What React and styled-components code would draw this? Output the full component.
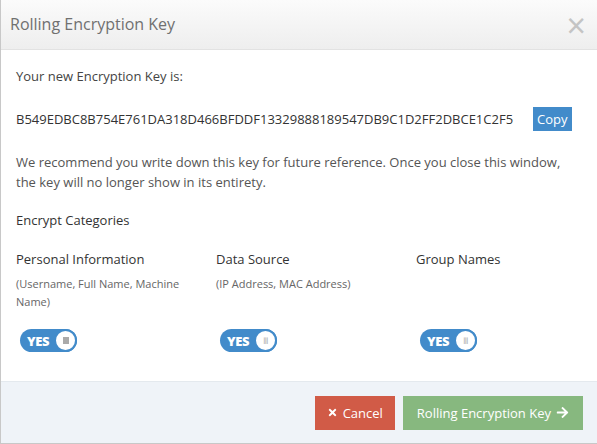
import React from "react";
import styled, { createGlobalStyle } from "styled-components";
import { FaTimes, FaArrowRight } from "react-icons/fa";

const GlobalStyle = createGlobalStyle`
  html, body {
    margin: 0;
    padding: 0;
    background: #fff;
  }
  body {
    font-family: "Open Sans", "Liberation Sans", Arial, sans-serif;
    font-size: 13px;
    color: #393939;
  }
`;

const KEY = "B549EDBC8B754E761DA318D466BFDDF13329888189547DB9C1D2FF2DBCE1C2F5";

const categories = [
  {
    title: "Personal Information",
    sub: "(Username, Full Name, Machine Name)",
    grip: "square",
  },
  { title: "Data Source", sub: "(IP Address, MAC Address)", grip: "lines" },
  { title: "Group Names", sub: "", grip: "lines" },
];

const Toggle = ({ grip }) => (
  <SwitchWrap>
    <SwitchLabel>YES</SwitchLabel>
    <Knob>{grip === "square" ? <GripSquare /> : <GripLines>III</GripLines>}</Knob>
  </SwitchWrap>
);

const App = () => {
  return (
    <>
      <GlobalStyle />
      <Modal>
        <Header>
          <Title>Rolling Encryption Key</Title>
          <Close>×</Close>
        </Header>
        <Body>
          <Text>Your new Encryption Key is:</Text>
          <KeyRow>
            <KeyText>{KEY}</KeyText>
            <CopyButton>Copy</CopyButton>
          </KeyRow>
          <Paragraph>
            We recommend you write down this key for future reference. Once you
            close this window, the key will no longer show in its entirety.
          </Paragraph>
          <SectionTitle>Encrypt Categories</SectionTitle>
          <Columns>
            {categories.map((c) => (
              <Column key={c.title}>
                <ColTitle>{c.title}</ColTitle>
                <ColSub>{c.sub}</ColSub>
                <Toggle grip={c.grip} />
              </Column>
            ))}
          </Columns>
        </Body>
        <Footer>
          <Button $color="#d15b47" $pad="12px">
            <FaTimes size={11} />
            Cancel
          </Button>
          <Button $color="#87b87f" $pad="14px">
            Rolling Encryption Key
            <FaArrowRight size={13} />
          </Button>
        </Footer>
      </Modal>
    </>
  );
};

export default App;

const Modal = styled.div`
  width: 597px;
  height: 444px;
  box-sizing: border-box;
  display: flex;
  flex-direction: column;
  border-left: 1px solid #c8c8c8;
  border-bottom: 1px solid #c8c8c8;
  background: #fff;
`;

const Header = styled.div`
  height: 50px;
  flex-shrink: 0;
  box-sizing: border-box;
  display: flex;
  align-items: center;
  justify-content: space-between;
  padding: 0 11px 0 9px;
  background: linear-gradient(#fbfbfb, #eeeeee);
  border-bottom: 1px solid #e2e2e2;
`;

const Title = styled.h4`
  margin: 0;
  font-size: 16px;
  font-weight: 400;
  color: #707070;
  margin-top: -2px;
`;

const Close = styled.span`
  font-size: 34px;
  font-weight: 400;
  line-height: 1;
  color: #c4c4c4;
`;

const Body = styled.div`
  flex: 1;
  padding: 16px 0 0 15px;
`;

const Text = styled.div`
  line-height: 20px;
  color: #444;
`;

const KeyRow = styled.div`
  display: flex;
  align-items: center;
  margin-top: 21px;
  height: 24px;
`;

const KeyText = styled.span`
  color: #333;
`;

const CopyButton = styled.button`
  margin-left: 20px;
  height: 24px;
  padding: 0 4px;
  border: 0;
  background: #428bca;
  color: #fff;
  font-family: inherit;
  font-size: 13px;
  line-height: 24px;
`;

const Paragraph = styled.p`
  margin: 21px 0 0;
  line-height: 20px;
  color: #555;
  padding-right: 22px;
`;

const SectionTitle = styled.div`
  margin-top: 18px;
  line-height: 20px;
  color: #333;
`;

const Columns = styled.div`
  display: grid;
  grid-template-columns: 200px 200px 1fr;
  margin-top: 19px;
`;

const Column = styled.div`
  display: flex;
  flex-direction: column;
`;

const ColTitle = styled.div`
  line-height: 20px;
  color: #333;
`;

const ColSub = styled.div`
  margin-top: 6px;
  height: 36px;
  font-size: 11px;
  line-height: 18px;
  color: #666;
  padding-right: 16px;
`;

const SwitchWrap = styled.div`
  margin: 18px 0 0 4px;
  width: 57px;
  height: 23px;
  border-radius: 12px;
  background: #428bca;
  display: flex;
  align-items: center;
  justify-content: space-between;
  box-sizing: border-box;
`;

const SwitchLabel = styled.span`
  color: #fff;
  font-weight: 800;
  font-size: 13px;
  padding-left: 7px;
  letter-spacing: -0.4px;
`;

const Knob = styled.span`
  width: 23px;
  height: 23px;
  box-sizing: border-box;
  border-radius: 50%;
  border: 2px solid #428bca;
  background: #fff;
  display: flex;
  align-items: center;
  justify-content: center;
`;

const GripSquare = styled.span`
  width: 6px;
  height: 7px;
  background: #aaa;
`;

const GripLines = styled.span`
  font-family: "DejaVu Sans", sans-serif;
  font-size: 7px;
  color: #aaa;
  letter-spacing: -0.5px;
  transform: scaleY(1.3);
`;

const Footer = styled.div`
  height: 62px;
  flex-shrink: 0;
  box-sizing: border-box;
  display: flex;
  align-items: center;
  justify-content: flex-end;
  gap: 8px;
  padding: 0 14px 0 0;
  background: #eff3f8;
  border-top: 1px solid #e4e9ee;
`;

const Button = styled.button`
  height: 34px;
  display: flex;
  align-items: center;
  gap: 5px;
  padding: 0 ${(p) => p.$pad || "13px"};
  border: 0;
  background: ${(p) => p.$color};
  color: #fff;
  font-family: inherit;
  font-size: 13px;
`;
